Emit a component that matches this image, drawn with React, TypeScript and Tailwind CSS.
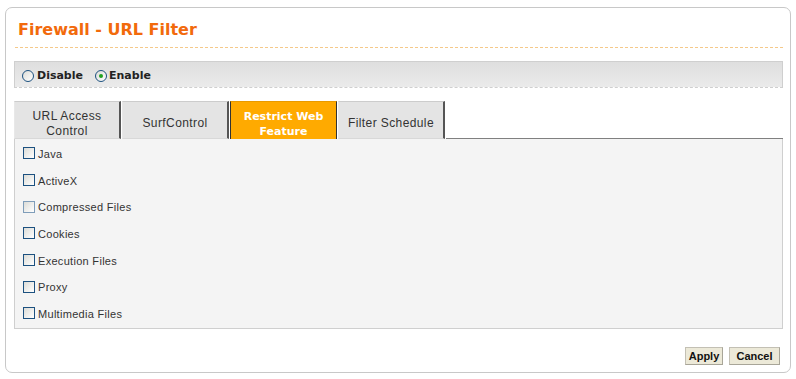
const features = [
  "Java",
  "ActiveX",
  "Compressed Files",
  "Cookies",
  "Execution Files",
  "Proxy",
  "Multimedia Files",
];

const tabs = [
  { label: ["URL Access", "Control"], active: false },
  { label: ["SurfControl"], active: false },
  { label: ["Restrict Web", "Feature"], active: true },
  { label: ["Filter Schedule"], active: false },
];

function Radio({ checked }: { checked?: boolean }) {
  return (
    <span className="flex h-[12px] w-[12px] items-center justify-center rounded-full border border-[#1c5180] bg-gradient-to-br from-[#dcdcd7] to-white">
      {checked && <span className="h-[4px] w-[4px] rounded-full bg-[#21a121]" />}
    </span>
  );
}

function Checkbox({ dim }: { dim?: boolean }) {
  return (
    <span
      className={
        dim
          ? "h-[12px] w-[12px] border border-[#7f9db9] bg-gradient-to-br from-[#dcdcd7] to-white"
          : "h-[12px] w-[12px] border border-[#1c5180] bg-gradient-to-br from-[#dcdcd7] to-white"
      }
    />
  );
}

export default function App() {
  return (
    <div className="h-[379px] w-[796px] bg-white pl-[5px] pt-[7px]">
      <div className="flex h-[366px] w-[786px] flex-col rounded-[7px] border border-[#c8c8c8] pl-[8px] pr-[7px]">
        <div className="ml-[1px] mt-[12px] h-[28px] border-b border-dashed border-[#f5c98a] pl-[3px] font-['DejaVu_Sans',sans-serif] text-[16px] font-bold leading-[20px] text-[#f26a0c]">
          Firewall - URL Filter
        </div>

        <div className="mt-[13px] flex h-[26px] items-center border border-b-0 border-[#cfcfcf] bg-gradient-to-b from-[#dedede] to-[#ebebeb] pl-[7px] pt-[3px] font-['DejaVu_Sans',sans-serif] text-[11px] font-bold text-[#222]">
          <div className="flex items-center gap-[3px]">
            <Radio />
            <span>Disable</span>
          </div>
          <div className="ml-[12px] flex items-center gap-[2px]">
            <Radio checked />
            <span>Enable</span>
          </div>
        </div>
        <div className="border-b border-dashed border-[#cfcfcf]" />

        <div className="mt-[13px] flex h-[38px]">
          {tabs.map((t) =>
            t.active ? (
              <div
                key={t.label.join(" ")}
                className="mr-[1px] flex h-[38px] w-[107px] flex-col items-center justify-center border-x border-t border-x-[#333] border-t-[#e89a00] bg-[#ffaa00] pt-[7px] font-['DejaVu_Sans',sans-serif] text-[11px] font-bold leading-[15px] text-white"
              >
                {t.label.map((l) => (
                  <span key={l}>{l}</span>
                ))}
              </div>
            ) : (
              <div
                key={t.label.join(" ")}
                className="mr-[1px] flex h-[38px] w-[107px] flex-col items-center justify-center border-b border-l border-r-2 border-t border-b-[#d8d8d8] border-l-[#e8e8e8] border-r-[#555] border-t-[#cccccc] bg-[#e4e4e4] pt-[7px] font-['Liberation_Sans',sans-serif] text-[12px] leading-[15px] tracking-[0.4px] text-[#333]"
              >
                {t.label.map((l) => (
                  <span key={l}>{l}</span>
                ))}
              </div>
            )
          )}
          <div className="flex-1 border-b border-[#808080]" />
        </div>

        <div className="flex h-[190px] w-[769px] flex-col border-x border-b border-[#cfcfcf] bg-[#f4f4f4] pb-[1px] pl-[8px]">
          {features.map((f) => (
            <div key={f} className="flex h-[26.67px] items-center gap-[3px] pt-[2px]">
              <Checkbox dim={f === "Compressed Files"} />
              <span className="mt-[2px] font-['Liberation_Sans',sans-serif] text-[11px] tracking-[0.3px] text-[#333]">
                {f}
              </span>
            </div>
          ))}
        </div>

        <div className="mt-[18px] flex w-[769px] justify-end gap-[6px] pr-[3px]">
          <button className="h-[18px] w-[38px] border border-[#c3c0b4] border-b-[#a8a598] border-r-[#a8a598] bg-[#ece9d8] font-['Liberation_Sans',sans-serif] text-[11px] font-bold leading-none text-[#111]">
            Apply
          </button>
          <button className="h-[18px] w-[51px] border border-[#c3c0b4] border-b-[#a8a598] border-r-[#a8a598] bg-[#ece9d8] font-['Liberation_Sans',sans-serif] text-[11px] font-bold leading-none text-[#111]">
            Cancel
          </button>
        </div>
      </div>
    </div>
  );
}
